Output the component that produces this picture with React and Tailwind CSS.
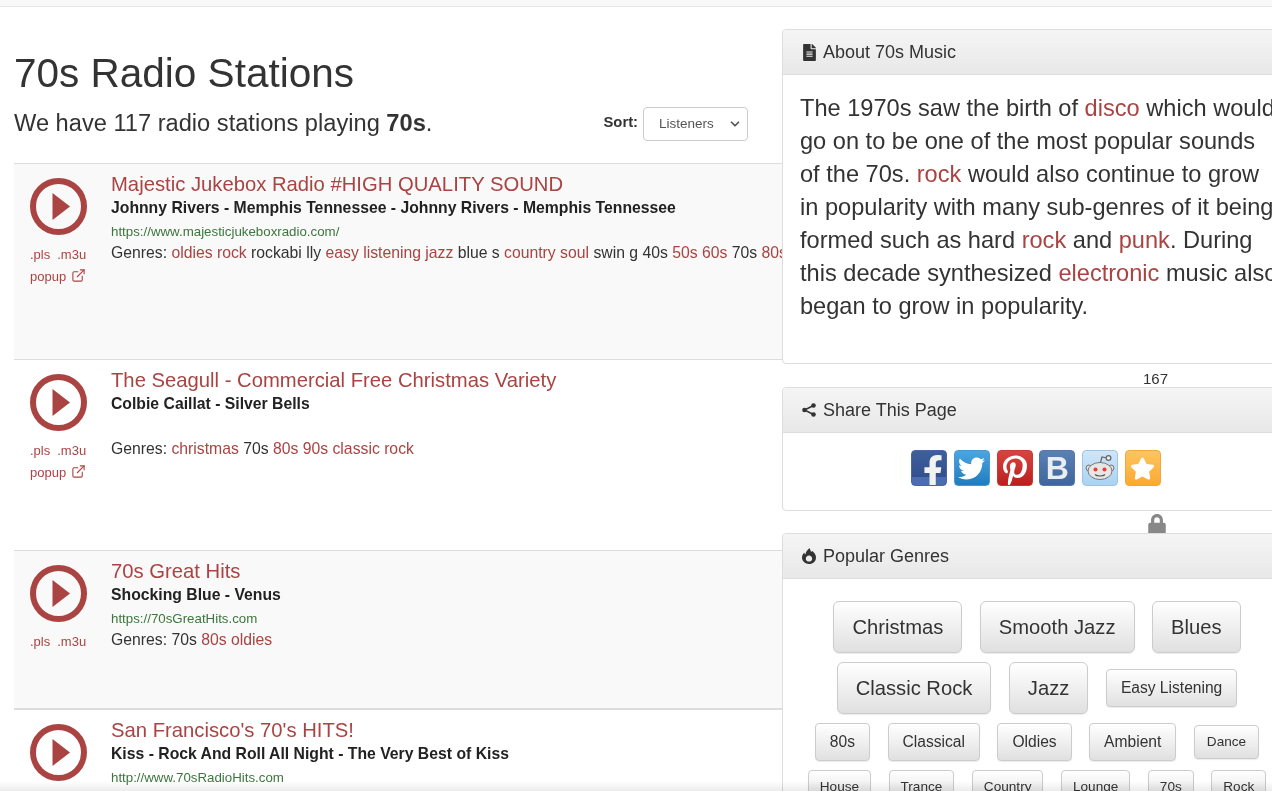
import { ExternalLink, ChevronDown } from 'lucide-react'
import { FaFacebookF, FaTwitter, FaPinterestP, FaStar, FaFileAlt, FaLock } from 'react-icons/fa'

const L = ({ children }) => <span className="text-[#a94442]">{children}</span>

const stations = [
  {
    title: 'Majestic Jukebox Radio #HIGH QUALITY SOUND',
    song: 'Johnny Rivers - Memphis Tennessee - Johnny Rivers - Memphis Tennessee',
    url: 'https://www.majesticjukeboxradio.com/',
    popup: true,
    h: 'h-[196px] border-t',
    bg: 'bg-[#f9f9f9]',
    genres: <>Genres: <L>oldies rock</L> rockabi lly <L>easy listening jazz</L> blue s <L>country soul</L> swin g 40s <L>50s 60s</L> 70s <L>80s</L></>,
  },
  {
    title: 'The Seagull - Commercial Free Christmas Variety',
    song: 'Colbie Caillat - Silver Bells',
    url: '',
    popup: true,
    h: 'h-[191px] border-t',
    bg: 'bg-white',
    genres: <>Genres: <L>christmas</L> 70s <L>80s 90s classic rock</L></>,
  },
  {
    title: '70s Great Hits',
    song: 'Shocking Blue - Venus',
    url: 'https://70sGreatHits.com',
    popup: false,
    h: 'h-[158px] border-t',
    bg: 'bg-[#f9f9f9]',
    genres: <>Genres: 70s <L>80s oldies</L></>,
  },
  {
    title: "San Francisco's 70's HITS!",
    song: 'Kiss - Rock And Roll All Night - The Very Best of Kiss',
    url: 'http://www.70sRadioHits.com',
    popup: false,
    h: 'h-[120px] border-t-2',
    bg: 'bg-white',
    genres: null,
  },
]

const genreRows = [
  [['Christmas', 'lg'], ['Smooth Jazz', 'lg'], ['Blues', 'lg']],
  [['Classic Rock', 'lg'], ['Jazz', 'lg'], ['Easy Listening', 'md']],
  [['80s', 'md'], ['Classical', 'md'], ['Oldies', 'md'], ['Ambient', 'md'], ['Dance', 'sm']],
  [['House', 'xs'], ['Trance', 'xs'], ['Country', 'xs'], ['Lounge', 'xs'], ['70s', 'xs'], ['Rock', 'xs']],
]

const btnSize = {
  lg: 'h-[52px] px-[18px] text-[20.2px] rounded-[6px]',
  md: 'h-[38px] px-[14px] text-[15.6px] rounded-[4px]',
  sm: 'h-[34px] px-[12px] text-[13.6px] rounded-[4px]',
  xs: 'h-[34px] px-[11px] text-[13.6px] rounded-[4px]',
}

function PlayIcon() {
  return (
    <svg width="57" height="57" viewBox="0 0 57 57" className="block">
      <circle cx="28.5" cy="28.5" r="25.5" fill="none" stroke="#a94442" strokeWidth="6" />
      <path d="M22.5 15 L40 28.5 L22.5 42 Z" fill="#a94442" />
    </svg>
  )
}

function FireIcon() {
  return (
    <svg width="14" height="16" viewBox="0 0 14 16" className="block">
      <path fillRule="evenodd" fill="#333" d="M7.5 0 C8 2 9 2.6 9 4 C9.6 3.7 9.9 3.3 10 2.8 C12.4 4.6 14 6.6 14 9.4 C14 13.2 11 16 7 16 C3 16 0 13.2 0 9.6 C0 7.4 1 5.8 2.4 4.6 C2.4 5.6 2.8 6.2 3.4 6.6 C3.6 4 5.4 2 7.5 0 Z M7 7.6 C5.2 7.6 3.8 9 3.8 10.7 C3.8 12.4 5.2 13.6 7 13.6 C8.8 13.6 10.2 12.4 10.2 10.7 C10.2 9 8.8 7.6 7 7.6 Z" />
    </svg>
  )
}

function ShareIcon() {
  return (
    <svg width="14" height="14" viewBox="0 0 14 14" className="block">
      <path d="M11.5 2.5 L2.5 7 L11.5 11.5" fill="none" stroke="#333" strokeWidth="1.5" />
      <circle cx="11.5" cy="2.5" r="2.3" fill="#333" />
      <circle cx="2.5" cy="7" r="2.3" fill="#333" />
      <circle cx="11.5" cy="11.5" r="2.3" fill="#333" />
    </svg>
  )
}

function RedditIcon() {
  return (
    <svg width="34" height="34" viewBox="0 0 34 34" className="block">
      <path d="M17 13 L19 6 L24 7" fill="none" stroke="#666" strokeWidth="1.2" />
      <circle cx="25.5" cy="7" r="2.4" fill="#eee" stroke="#666" strokeWidth="1.2" />
      <circle cx="6" cy="17" r="3" fill="#ddd" stroke="#777" strokeWidth="1" />
      <circle cx="28" cy="17" r="3" fill="#ddd" stroke="#777" strokeWidth="1" />
      <ellipse cx="17" cy="20" rx="12" ry="8.5" fill="#e6e6e6" stroke="#777" strokeWidth="1" />
      <circle cx="12.5" cy="18.5" r="2" fill="#f0392b" />
      <circle cx="21.5" cy="18.5" r="2" fill="#f0392b" />
      <path d="M12 23.5 C14 25.5 20 25.5 22 23.5" fill="none" stroke="#555" strokeWidth="1.2" />
    </svg>
  )
}

function Station({ s }) {
  return (
    <div className={`${s.h} ${s.bg} border-[#ddd] flex overflow-hidden`}>
      <div className="w-[97px] shrink-0 pl-[16px] pt-[14px]">
        <PlayIcon />
        <div className="mt-[11px] flex gap-[7px] text-[13px] leading-[18px] text-[#a94442]">
          <span>.pls</span>
          <span>.m3u</span>
        </div>
        {s.popup && (
          <div className="mt-[4px] flex items-start gap-[5px] text-[13px] leading-[18px] text-[#a94442]">
            <span>popup</span>
            <ExternalLink className="w-[15px] h-[15px]" strokeWidth={1.75} />
          </div>
        )}
      </div>
      <div className="flex-1 min-w-0 pt-[8px]">
        <div className="mb-[1px] text-[20.25px] leading-[24px] text-[#a94442] whitespace-nowrap">{s.title}</div>
        <div className="text-[15.75px] leading-[22px] font-bold text-[#222] whitespace-nowrap">{s.song}</div>
        <div className="h-[24px] text-[13.3px] leading-[26px] text-[#3c763d] whitespace-nowrap">{s.url}</div>
        {s.genres && <div className="text-[15.75px] leading-[20px] text-[#333] whitespace-nowrap">{s.genres}</div>}
      </div>
    </div>
  )
}

function Panel({ icon, title, children }) {
  return (
    <div className="border border-[#ddd] rounded-[4px] bg-white">
      <div className="h-[45px] flex items-center gap-[7px] pl-[19px] border-b border-[#ddd] rounded-t-[4px] bg-gradient-to-b from-[#f5f5f5] to-[#e8e8e8] text-[18px] text-[#333]">
        <span className="w-[14px] flex justify-center">{icon}</span>
        <span>{title}</span>
      </div>
      {children}
    </div>
  )
}

function Social({ className, children }) {
  return (
    <div className={`relative w-[36px] h-[36px] rounded-[4px] flex items-center justify-center overflow-hidden border ${className}`}>
      {children}
    </div>
  )
}

export default function App() {
  return (
    <div className="relative h-[791px] w-[1272px] overflow-hidden bg-white font-['Liberation_Sans',Arial,sans-serif] text-[#333]">
      {/* Top bar */}
      <div className="h-[7px] bg-[#f8f8f8] border-b border-[#e7e7e7]" />

      <div className="flex">
        {/* Left column */}
        <div className="w-[782px] shrink-0 pl-[14px]">
          <h1 className="mt-[40px] text-[40.5px] leading-[52px] text-[#333]">70s Radio Stations</h1>
          <div className="mt-[9px] h-[38px] flex items-start justify-between pr-[34px]">
            <p className="text-[23.65px] leading-[30px]">We have 117 radio stations playing <b>70s</b>.</p>
            <div className="-mt-[1px] flex items-start gap-[5px]">
              <span className="text-[14.8px] font-bold leading-[30px]">Sort:</span>
              <div className="w-[105px] h-[34px] border border-[#ccc] rounded-[4px] flex items-center justify-between pl-[15px] pr-[5px] text-[13.5px] text-[#555] bg-white">
                <span>Listeners</span>
                <ChevronDown className="w-[14px] h-[14px]" strokeWidth={3} />
              </div>
            </div>
          </div>
          <div className="mt-[17px]">
            {stations.map((s) => <Station key={s.title} s={s} />)}
          </div>
        </div>

        {/* Right column */}
        <div className="w-[510px] shrink-0 pt-[22px]">
          <Panel title="About 70s Music" icon={<FaFileAlt className="w-[13px] h-[17px] text-[#333]" />}>
            <p className="w-[500px] h-[288px] pl-[17px] pr-[4px] pt-[17px] text-[23.6px] leading-[33px] text-[#333]">
              The 1970s saw the birth of <L>disco</L> which would go on to be one of the most popular sounds of the 70s. <L>rock</L> would also continue to grow in popularity with many sub-genres of it being formed such as hard <L>rock</L> and <L>punk</L>. During this decade synthesized <L>electronic</L> music also began to grow in popularity.
            </p>
          </Panel>

          <div className="h-[23px] pl-[361px] text-[15px] leading-[30px] text-[#333]">167</div>

          <Panel title="Share This Page" icon={<ShareIcon />}>
            <div className="h-[77px] pt-[17px] pr-[2px] flex justify-center gap-[6.8px]">
              <Social className="bg-gradient-to-b from-[#3f5e9c] to-[#2f4c8a] border-[#4a66a0]">
                <div className="absolute left-0 right-0 bottom-0 h-[8px] bg-[#4b6cb0]" />
                <FaFacebookF className="relative w-[20px] h-[32px] text-[#f2f2f2] translate-x-[4px] translate-y-[3px]" />
              </Social>
              <Social className="bg-gradient-to-b from-[#4aa5e0] to-[#1f7dbd] border-[#4a9ad0]">
                <FaTwitter className="w-[27px] h-[27px] text-white" />
              </Social>
              <Social className="bg-gradient-to-b from-[#d9433f] to-[#b91f1f] border-[#c93a36]">
                <FaPinterestP className="w-[24px] h-[32px] text-white translate-y-[3px]" />
              </Social>
              <Social className="bg-gradient-to-b from-[#5a81b5] to-[#3f659b] border-[#5577a8]">
                <span className="text-[32px] leading-none font-bold text-[#eaeef3]">B</span>
              </Social>
              <Social className="bg-gradient-to-b from-[#cfe6fa] to-[#a9d3f2] border-[#9fc4e0]">
                <RedditIcon />
              </Social>
              <Social className="bg-gradient-to-b from-[#fdc55e] to-[#fba92e] border-[#f0a83c]">
                <FaStar className="w-[25px] h-[25px] text-white" />
              </Social>
            </div>
          </Panel>

          <div className="h-[22px] pl-[366px] pt-[3px] overflow-hidden">
            <FaLock className="w-[18px] h-[20px] text-[#888]" />
          </div>

          <Panel title="Popular Genres" icon={<FireIcon />}>
            <div className="pt-[22px] pb-[20px] flex flex-col gap-[9px]">
              {genreRows.map((row, i) => (
                <div key={i} className="flex justify-center items-center gap-[17.5px]">
                  {row.map(([name, size]) => (
                    <div key={name} className={`${btnSize[size]} flex items-center border border-[#ccc] bg-gradient-to-b from-white to-[#e0e0e0] text-[#333] shadow-[0_1px_1px_rgba(0,0,0,0.08)]`}>
                      {name}
                    </div>
                  ))}
                </div>
              ))}
            </div>
          </Panel>
        </div>
      </div>

      {/* Bottom fade */}
      <div className="absolute left-0 right-0 bottom-0 h-[10px] bg-gradient-to-b from-white to-[#ececec] mix-blend-multiply" />
    </div>
  )
}
